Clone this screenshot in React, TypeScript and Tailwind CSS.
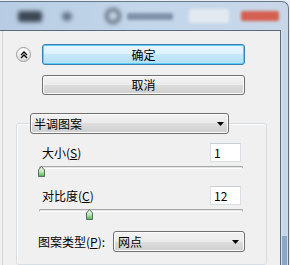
import React from 'react';

const btnGray =
  'flex items-center justify-center rounded-[3px] border border-[#707070] bg-[linear-gradient(#f2f2f2_0%,#ebebeb_50%,#dddddd_50%,#cfcfcf_100%)] shadow-[inset_0_0_0_1px_#fcfcfc]';

function DropArrow() {
  return (
    <svg width="7" height="4" viewBox="0 0 7 4">
      <polygon points="0,0 7,0 3.5,4" fill="#000" />
    </svg>
  );
}

function Thumb() {
  return (
    <svg width="7" height="11" viewBox="0 0 7 11">
      <defs>
        <linearGradient id="tg" x1="0" y1="0" x2="0" y2="1">
          <stop offset="0" stopColor="#f4fbf4" />
          <stop offset="0.5" stopColor="#bfe7bf" />
          <stop offset="1" stopColor="#4fb04f" />
        </linearGradient>
      </defs>
      <polygon points="0.5,4 3.5,0.5 6.5,4 6.5,10.5 0.5,10.5" fill="url(#tg)" stroke="#55705a" strokeWidth="1" />
    </svg>
  );
}

// slider track, thumb sits over it
function Slider({ pos }: { pos: number }) {
  return (
    <div className="relative ml-[22px] h-[11px] w-[204px]">
      <div className="mt-[4px] h-[3px] rounded-[2px] border border-[#a8a8a8] border-b-white bg-[#e4e4e4]" />
      <div className="absolute top-0" style={{ left: pos }}>
        <Thumb />
      </div>
    </div>
  );
}

function ValueRow({ label, mnemonic, value }: { label: string; mnemonic: string; value: string }) {
  return (
    <div className="flex items-center justify-between pl-[25px] pr-[25px]">
      <span className="leading-[14px]">
        {label}(<span className="underline">{mnemonic}</span>)
      </span>
      <div className="flex h-[19px] w-[31px] items-center border border-[#d9dfe6] border-t-[#c7ced6] bg-white pl-[3px] leading-none">
        {value}
      </div>
    </div>
  );
}

// blurred taskbar-ish strip behind the dialog
function TitleBar() {
  return (
    <div className="mt-[1px] flex h-[29px] w-[289px] shrink-0 items-center rounded-tr-[7px] border-t border-r border-[#66778a] bg-[linear-gradient(90deg,#b7cce3_0%,#c3d6ea_50%,#c8d7e8_100%)]">
      <div className="ml-[18px] h-[11px] w-[24px] shrink-0 rounded-[3px] bg-[#3d4754] blur-[2px]" />
      <div className="ml-[20px] h-[9px] w-[10px] shrink-0 rounded-full bg-[#66768a] blur-[2px]" />
      <div className="ml-[33px] h-[16px] w-[16px] shrink-0 rounded-full border-[3px] border-[#5a6572] blur-[2px]" />
      <div className="ml-[6px] h-[7px] w-[46px] shrink-0 rounded-[2px] bg-[#7f92aa] blur-[1.5px]" />
      <div className="ml-[16px] h-[14px] w-[40px] shrink-0 rounded-[2px] bg-[#e2e9f1] blur-[1.5px]" />
      <div className="ml-[12px] h-[10px] w-[38px] shrink-0 rounded-[2px] bg-[#d4604f] blur-[1.5px]" />
    </div>
  );
}

export default function App() {
  return (
    <div className="flex h-[265px] w-[290px] flex-col overflow-hidden bg-[#e9eef4] font-['Noto_Sans_CJK_SC','Noto_Sans',sans-serif] text-[12px] text-black">
      <TitleBar />
      <div className="flex min-h-0 flex-1">
        {/* main panel */}
        <div className="flex w-[281px] border-t border-r border-[#5b6b7d] bg-[#f0f0f0]">
          <div className="ml-[2px] flex flex-1 flex-col border-l border-[#d6d6d6]">
            <div className="mt-[13px] flex items-center">
              <div className="ml-[13px] flex h-[15px] w-[15px] items-center justify-center rounded-full border border-[#9a9a9a] bg-[linear-gradient(#ffffff,#dcdcdc)]">
                <svg width="8" height="8" viewBox="0 0 8 8">
                  <path d="M1 4 L4 1 L7 4 M1 7 L4 4 L7 7" fill="none" stroke="#000" strokeWidth="1.4" />
                </svg>
              </div>
              <div className="ml-[11px] flex h-[21px] w-[203px] items-center justify-center rounded-[3px] border border-[#3c7fb1] bg-[linear-gradient(#eaf6fd_0%,#dcf1fc_50%,#c6e8fb_50%,#b2def6_100%)] shadow-[inset_0_0_0_1px_#5ecdf7]">
                确定
              </div>
            </div>
            <div className={`ml-[39px] mt-[10px] h-[20px] w-[203px] ${btnGray}`}>取消</div>

            {/* group box with dropdown header */}
            <div className="ml-[13px] mt-[28px] h-[200px] w-[251px] rounded-[3px] border border-[#d5dfe5] shadow-[inset_1px_1px_0_#ffffff]">
              <div className={`-mt-[11px] ml-[13px] h-[21px] w-[199px] !justify-between px-[3px] pr-[4px] ${btnGray}`}>
                <span>半调图案</span>
                <DropArrow />
              </div>
              <div className="mt-[9px]">
                <ValueRow label="大小" mnemonic="S" value="1" />
              </div>
              <div className="mt-[3px]">
                <Slider pos={-1} />
              </div>
              <div className="mt-[9px]">
                <ValueRow label="对比度" mnemonic="C" value="12" />
              </div>
              <div className="mt-[4px]">
                <Slider pos={47} />
              </div>
              <div className="mt-[11px] flex items-center pl-[21px] pr-[21px]">
                <span>
                  图案类型(<span className="underline">P</span>):
                </span>
                <div className={`ml-auto h-[21px] w-[132px] !justify-between pl-[4px] pr-[5px] ${btnGray}`}>
                  <span>网点</span>
                  <DropArrow />
                </div>
              </div>
            </div>
          </div>
        </div>
        {/* window frame */}
        <div className="flex w-[8px] flex-col border-r border-[#5f7080] bg-[linear-gradient(90deg,#d4e1ee,#c2d4e7,#cddcec)]">
          <div className="mt-auto mb-0 ml-[1px] h-[30px] w-[5px] border-t border-[#c9d9ec] bg-[#8aa7ca]" />
        </div>
      </div>
    </div>
  );
}
